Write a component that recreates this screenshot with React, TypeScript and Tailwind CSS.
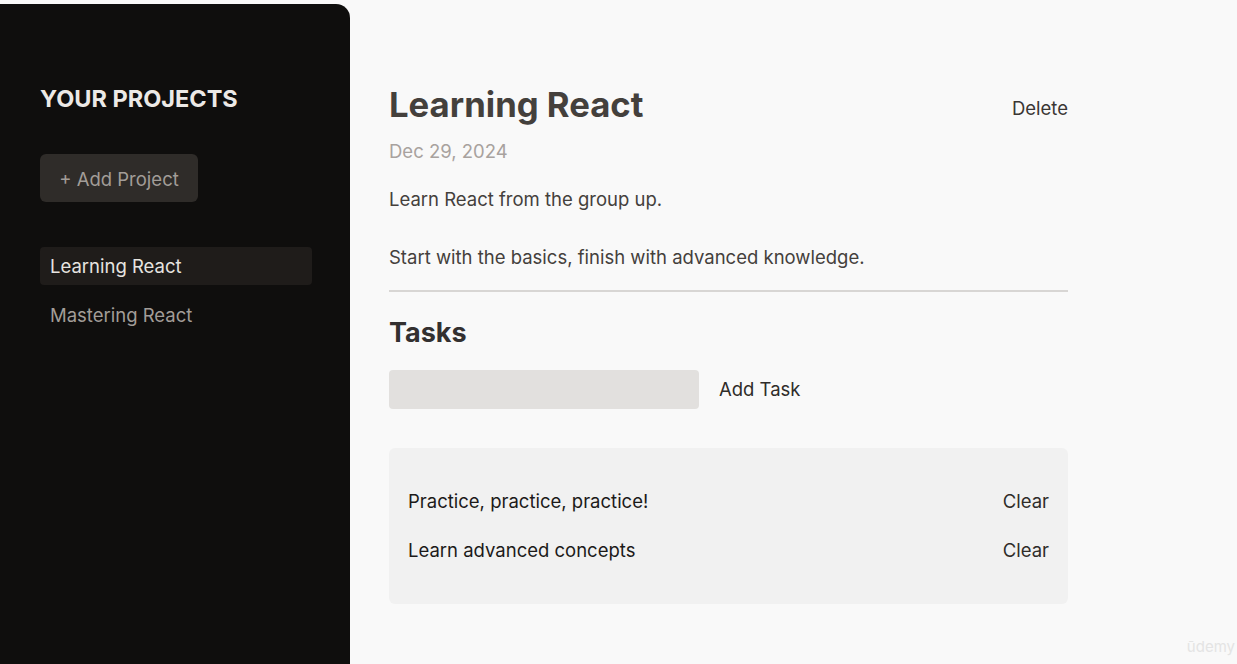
import React from "react";

const projects = [
  { id: "p1", title: "Learning React" },
  { id: "p2", title: "Mastering React" },
];

const tasks = ["Practice, practice, practice!", "Learn advanced concepts"];

export default function App() {
  const selectedId = "p1";

  return (
    <div
      className="relative flex h-[664px] w-full overflow-hidden bg-[#f9f9f9]"
      style={{ fontFamily: "Inter, 'Noto Sans', sans-serif" }}
    >
      <aside className="mt-[4px] w-[350px] shrink-0 rounded-tr-[14px] bg-[#0f0e0d] px-10 pt-[79px]">
        <h2 className="text-[23.5px] font-bold uppercase leading-[32px] text-[#ece9e6]">
          Your Projects
        </h2>
        <button className="mt-[39px] h-[48px] w-[158px] rounded-md bg-[#2f2c29] pt-[3px] text-[18.5px] text-[#a29d98]">
          + Add Project
        </button>
        <ul className="mt-[45px] flex flex-col gap-[11px]">
          {projects.map((p) => (
            <li key={p.id}>
              <button
                className={`h-[38px] w-[272px] rounded-sm px-[10px] pt-[2px] text-left text-[18.5px] ${
                  p.id === selectedId
                    ? "bg-[#1f1c1a] text-[#e7e4e0]"
                    : "text-[#a29d98]"
                }`}
              >
                {p.title}
              </button>
            </li>
          ))}
        </ul>
      </aside>

      <main className="w-[718px] pl-[39px] pt-[82px]">
        <header className="border-b-2 border-[#d8d6d4] pb-[18px]">
          <div className="flex items-start justify-between">
            <h1 className="text-[34.7px] font-bold leading-[44px] text-[#44403c]">
              Learning React
            </h1>
            <button className="mt-[12px] text-[18.5px] leading-[28px] text-[#3a3633]">Delete</button>
          </div>
          <p className="mt-[11px] text-[18.5px] leading-[28px] text-[#a8a29e]">Dec 29, 2024</p>
          <p className="mt-[20px] whitespace-pre-wrap text-[18.5px] leading-[29px] text-[#44403c]">
            {"Learn React from the group up.\n\nStart with the basics, finish with advanced knowledge."}
          </p>
        </header>

        <section className="mt-[22px]">
          <h2 className="text-[27px] font-bold leading-[38px] text-[#333030]">Tasks</h2>
          <div className="mt-[18px] flex items-center gap-5">
            <input className="h-[39px] w-[310px] rounded-sm bg-[#e2e0de] px-2 outline-none" />
            <button className="text-[18.5px] text-[#2f2c29]">Add Task</button>
          </div>
          <ul className="mt-[39px] flex flex-col gap-[20px] rounded-md bg-[#f1f1f1] px-[19px] pb-[39px] pt-[39px]">
            {tasks.map((t) => (
              <li key={t} className="flex items-center justify-between text-[18.5px] leading-[29px] text-[#1c1a19]">
                <span>{t}</span>
                <button className="text-[#2f2c29]">Clear</button>
              </li>
            ))}
          </ul>
        </section>
      </main>

      <span className="absolute bottom-[6px] right-[2px] text-[15px] text-[#e4e4e4]">ūdemy</span>
    </div>
  );
}
